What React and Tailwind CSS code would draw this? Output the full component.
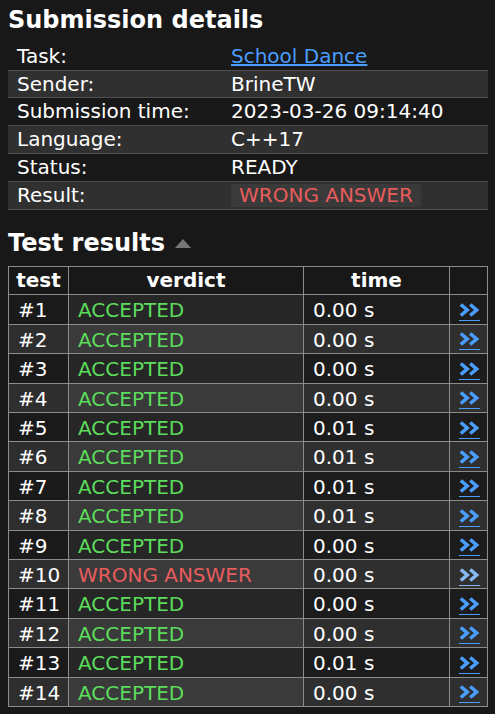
import React from 'react';

const details = [
  { label: 'Task:', value: 'School Dance', link: true },
  { label: 'Sender:', value: 'BrineTW' },
  { label: 'Submission time:', value: '2023-03-26 09:14:40' },
  { label: 'Language:', value: 'C++17' },
  { label: 'Status:', value: 'READY' },
  { label: 'Result:', value: 'WRONG ANSWER', badge: true },
];

const tests = [
  ['#1', 'ACCEPTED', '0.00 s'],
  ['#2', 'ACCEPTED', '0.00 s'],
  ['#3', 'ACCEPTED', '0.00 s'],
  ['#4', 'ACCEPTED', '0.00 s'],
  ['#5', 'ACCEPTED', '0.01 s'],
  ['#6', 'ACCEPTED', '0.01 s'],
  ['#7', 'ACCEPTED', '0.01 s'],
  ['#8', 'ACCEPTED', '0.01 s'],
  ['#9', 'ACCEPTED', '0.00 s'],
  ['#10', 'WRONG ANSWER', '0.00 s'],
  ['#11', 'ACCEPTED', '0.00 s'],
  ['#12', 'ACCEPTED', '0.00 s'],
  ['#13', 'ACCEPTED', '0.01 s'],
  ['#14', 'ACCEPTED', '0.00 s'],
];

function Chevrons({ visited }) {
  return (
    <span className={`inline-flex border-b ${visited ? 'border-[#86b8f2]' : 'border-[#4a9eff]'} pb-[3px]`}>
      <svg width="21" height="14" viewBox="0 0 21 14" className="block">
        <g fill="none" stroke={visited ? '#86b8f2' : '#4a9eff'} strokeWidth="3.6" strokeLinejoin="miter">
          <polyline points="1.8,1.5 8.2,7 1.8,12.5" />
          <polyline points="11.2,1.5 17.6,7 11.2,12.5" />
        </g>
      </svg>
    </span>
  );
}

export default function App() {
  return (
    <div className="min-h-screen bg-[#181818] text-white font-['DejaVu_Sans',Verdana,sans-serif] text-[20px] pl-2 pt-[6px]">
      <h1 className="text-[24px] font-bold leading-[28.8px]">Submission details</h1>

      <table className="w-[480px] border-collapse mt-[8px] table-fixed">
        <colgroup>
          <col className="w-[214px]" />
          <col />
        </colgroup>
        <tbody>
          {details.map((d, i) => (
            <tr key={d.label} className={i % 2 === 1 ? 'bg-[#303030] border-y border-[#4e4e4e]' : ''}>
              <td className="px-[9px] py-[2px] leading-[22.8px]">{d.label}</td>
              <td className="px-[9px] py-[2px] leading-[22.8px]">
                {d.link ? (
                  <a href="#" className="text-[#4a9eff] underline">{d.value}</a>
                ) : d.badge ? (
                  <span className="inline-block bg-[#3a3a3a] text-[#e85c5c] rounded-[3px] px-2">{d.value}</span>
                ) : (
                  d.value
                )}
              </td>
            </tr>
          ))}
        </tbody>
      </table>

      <div className="flex items-center mt-[19px] h-[28.8px]">
        <h2 className="text-[24px] font-bold leading-[28.8px]">Test results</h2>
        <svg width="16" height="9" viewBox="0 0 16 9" className="ml-[10px] mt-[2px]">
          <polygon points="8,0 16,9 0,9" fill="#777777" />
        </svg>
      </div>

      <table className="w-[480px] border-collapse table-fixed mt-[9px] border border-[#8c8c8c]">
        <colgroup>
          <col className="w-[60px]" />
          <col className="w-[235px]" />
          <col className="w-[146px]" />
          <col />
        </colgroup>
        <thead>
          <tr>
            <th className="border border-[#8c8c8c] font-bold leading-[23px] py-[2px]">test</th>
            <th className="border border-[#8c8c8c] font-bold leading-[23px] py-[2px]">verdict</th>
            <th className="border border-[#8c8c8c] font-bold leading-[23px] py-[2px]">time</th>
            <th className="border border-[#8c8c8c]"></th>
          </tr>
        </thead>
        <tbody>
          {tests.map(([n, verdict, time], i) => {
            const even = i % 2 === 1;
            const wrong = verdict !== 'ACCEPTED';
            return (
              <tr key={n}>
                <td className={`border border-[#8c8c8c] px-[9px] pt-[3px] pb-[1px] leading-[24.4px] ${even ? 'bg-[#2e2e2e]' : 'bg-[#1a1a1a]'}`}>{n}</td>
                <td className={`border border-[#8c8c8c] px-[9px] pt-[3px] pb-[1px] leading-[24.4px] ${even ? 'bg-[#3a3a3a]' : 'bg-[#262626]'} ${wrong ? 'text-[#e85c5c]' : 'text-[#5cdc5c]'}`}>{verdict}</td>
                <td className={`border border-[#8c8c8c] px-[9px] pt-[3px] pb-[1px] leading-[24.4px] ${even ? 'bg-[#2f2f2f]' : 'bg-[#1c1c1c]'}`}>{time}</td>
                <td className={`border border-[#8c8c8c] px-[9px] pt-[3px] pb-[1px] leading-[24.4px] ${even ? 'bg-[#2f2f2f]' : 'bg-[#1c1c1c]'}`}>
                  <a href="#" className="inline-flex align-middle">
                    <Chevrons visited={wrong} />
                  </a>
                </td>
              </tr>
            );
          })}
        </tbody>
      </table>
    </div>
  );
}
